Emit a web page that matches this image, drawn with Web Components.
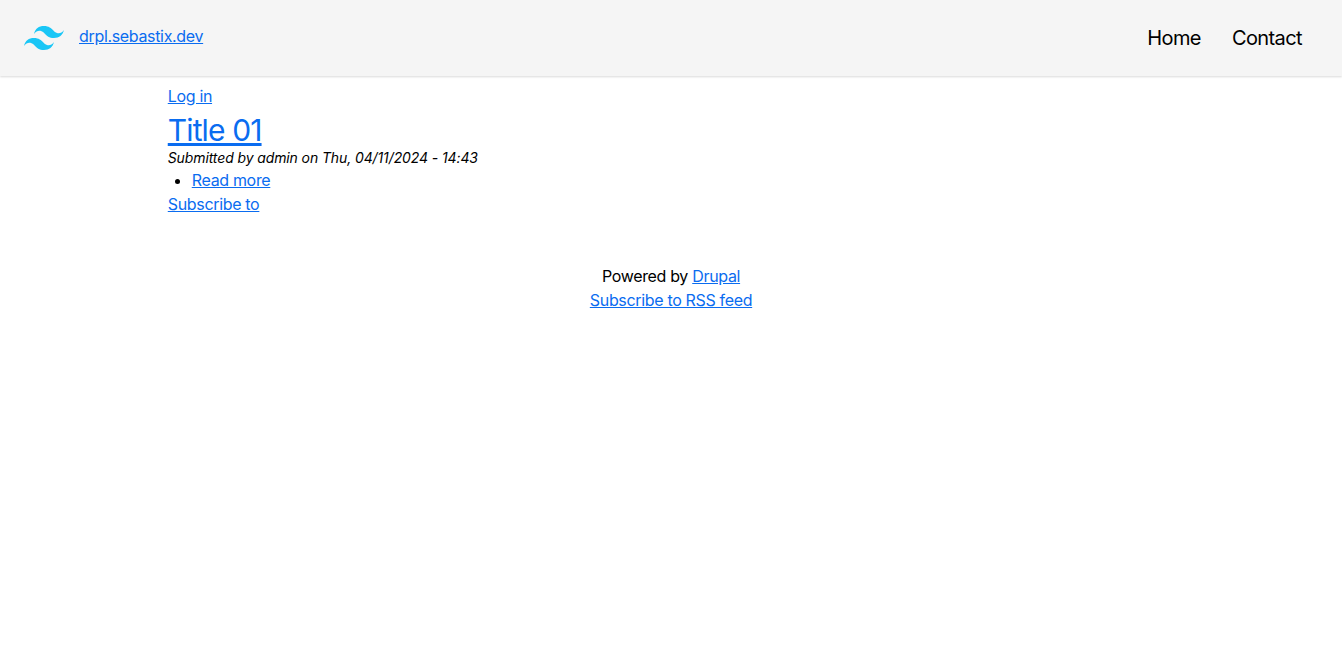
<!DOCTYPE html>
<html lang="en">
<head>
<meta charset="utf-8">
<title>drpl.sebastix.dev</title>
<style>
    html, body { margin: 0; padding: 0; background: #fff; }
    body { font-family: Inter, "Liberation Sans", sans-serif; font-size: 16px; line-height: 24px; letter-spacing: -0.33px; color: #000; }
</style>
</head>
<body>
<site-header name="drpl.sebastix.dev">
    <a slot="nav" href="#">Home</a>
    <a slot="nav" href="#">Contact</a>
</site-header>
<page-content>
    <a href="#" style="color:#0a6cf0">Log in</a>
    <article-teaser title-text="Title 01" meta="Submitted by admin on Thu, 04/11/2024 - 14:43" more="Read more"></article-teaser>
    <a href="#" style="color:#0a6cf0">Subscribe to</a>
</page-content>
<site-footer></site-footer>

<script>
class SiteHeader extends HTMLElement {
    constructor() {
        super();
        this.attachShadow({ mode: "open" });
        this.shadowRoot.innerHTML = `
            <style>
                :host {
                    display: flex;
                    align-items: center;
                    justify-content: space-between;
                    height: 76px;
                    box-sizing: border-box;
                    padding: 0 24px;
                    background: #f5f5f5;
                    box-shadow: 0 1px 2px rgba(0, 0, 0, 0.15);
                }
                .brand { display: flex; align-items: center; gap: 15px; }
                .brand svg { display: block; width: 40px; height: 40px; }
                .brand a { color: #0a6cf0; position: relative; top: -2px; }
                nav { display: flex; gap: 31px; padding-right: 16px; }
                ::slotted(a) { color: #000; text-decoration: none; font-size: 20px; letter-spacing: -0.6px; }
            </style>
            <div class="brand">
                <svg viewBox="0 0 24 24" fill="#1ac6f6"><path d="M12.001 4.8c-3.2 0-5.2 1.6-6 4.8 1.2-1.6 2.6-2.2 4.2-1.8.913.228 1.565.89 2.288 1.624C13.666 10.618 15.027 12 18.001 12c3.2 0 5.2-1.6 6-4.8-1.2 1.6-2.6 2.2-4.2 1.8-.913-.228-1.565-.89-2.288-1.624C16.337 6.182 14.976 4.8 12.001 4.8zM6.001 12c-3.2 0-5.2 1.6-6 4.8 1.2-1.6 2.6-2.2 4.2-1.8.913.228 1.565.89 2.288 1.624 1.177 1.194 2.538 2.576 5.512 2.576 3.2 0 5.2-1.6 6-4.8-1.2 1.6-2.6 2.2-4.2 1.8-.913-.228-1.565-.89-2.288-1.624C10.337 13.382 8.976 12 6.001 12z"/></svg>
                <a href="#">${this.getAttribute("name")}</a>
            </div>
            <nav><slot name="nav"></slot></nav>
        `;
    }
}

class PageContent extends HTMLElement {
    constructor() {
        super();
        this.attachShadow({ mode: "open" });
        this.shadowRoot.innerHTML = `
            <style>
                :host { display: block; width: 75%; margin: 0 auto; padding-top: 8px; }
            </style>
            <slot></slot>
        `;
    }
}

class ArticleTeaser extends HTMLElement {
    constructor() {
        super();
        this.attachShadow({ mode: "open" });
        this.shadowRoot.innerHTML = `
            <style>
                :host { display: block; }
                a { color: #0a6cf0; }
                h2 { margin: 0; font-size: 30px; line-height: 36px; font-weight: 400; padding-top: 4px; letter-spacing: -0.87px; }
                .meta { font-size: 14px; line-height: 20px; font-style: italic; height: 20px; letter-spacing: -0.11px; }
                ul { margin: 0; padding: 0 0 0 24px; }
            </style>
            <h2><a href="#">${this.getAttribute("title-text")}</a></h2>
            <div class="meta">${this.getAttribute("meta")}</div>
            <ul><li><a href="#">${this.getAttribute("more")}</a></li></ul>
        `;
    }
}

class SiteFooter extends HTMLElement {
    constructor() {
        super();
        this.attachShadow({ mode: "open" });
        this.shadowRoot.innerHTML = `
            <style>
                :host { display: block; text-align: center; padding-top: 48px; }
                a { color: #0a6cf0; }
            </style>
            <div>Powered by <a href="#">Drupal</a></div>
            <div><a href="#">Subscribe to RSS feed</a></div>
        `;
    }
}

customElements.define("site-header", SiteHeader);
customElements.define("page-content", PageContent);
customElements.define("article-teaser", ArticleTeaser);
customElements.define("site-footer", SiteFooter);
</script>
</body>
</html>
